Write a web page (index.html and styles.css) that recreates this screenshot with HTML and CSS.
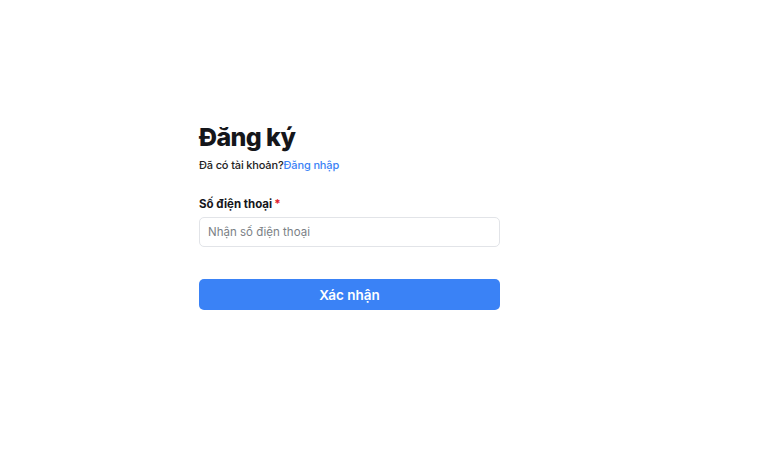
FILE: index.html
```html
<!DOCTYPE html>
<html lang="vi">
<head>
<meta charset="utf-8">
<link rel="stylesheet" href="styles.css">
</head>
<body>
<main class="page">
  <form class="form">
    <h1 class="title">Đăng ký</h1>
    <p class="subtitle">Đã có tài khoản?<a class="link" href="#">Đăng nhập</a></p>
    <label class="label">Số điện thoại<span class="req">*</span></label>
    <input class="input" type="text" placeholder="Nhận số điện thoại">
    <button class="btn" type="button">Xác nhận</button>
  </form>
</main>
</body>
</html>
```

FILE: styles.css
```css
* { box-sizing: border-box; }
html, body { margin: 0; padding: 0; background: #fff; }
body { font-family: Inter, "Noto Sans", sans-serif; color: #17181c; }
.page { padding: 121px 0 0 199px; }
.form { width: 301px; display: flex; flex-direction: column; }
.title { margin: 0; font-size: 25px; font-weight: 800; line-height: 32px; letter-spacing: -0.6px; color: #15161a; }
.subtitle { margin: 4px 0 0; font-size: 11px; line-height: 16px; font-weight: 500; letter-spacing: -0.15px; color: #222; }
.link { color: #3b82f6; text-decoration: none; }
.label { margin-top: 23px; font-size: 11.5px; font-weight: 700; line-height: 16px; color: #15161a; }
.req { color: #e11d2e; margin-left: 2px; }
.input { margin-top: 5px; height: 30px; border: 1px solid #e2e4e8; border-radius: 5px; padding: 0 8px; font-family: inherit; font-size: 11.5px; color: #333; outline: none; }
.input::placeholder { color: #7b7f86; }
.btn { margin-top: 32px; height: 31px; border: none; border-radius: 5px; background: #3a82f6; color: #fff; font-family: inherit; font-size: 13.5px; font-weight: 600; cursor: pointer; }
```
